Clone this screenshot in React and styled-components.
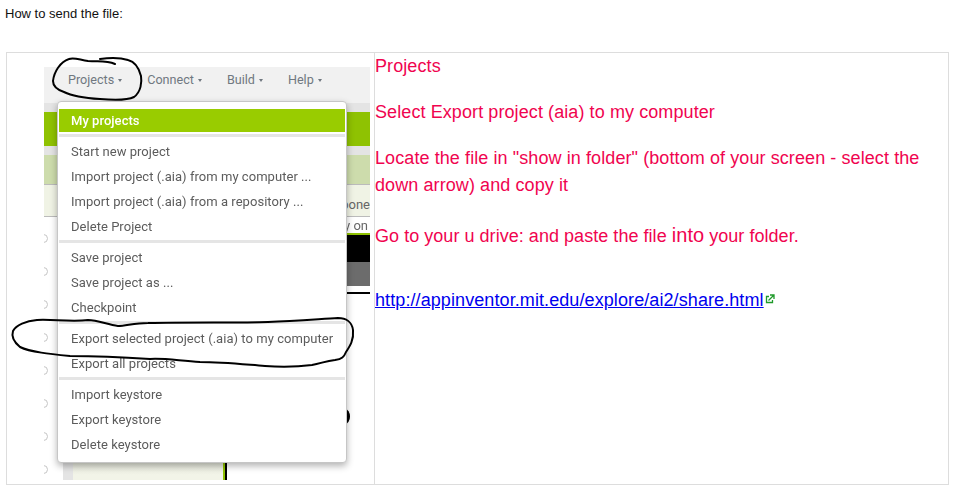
import React from 'react';
import styled, {createGlobalStyle} from 'styled-components';

const GlobalStyle = createGlobalStyle`
  html, body {
    margin: 0;
    padding: 0;
    background: #fff;
  }
`

const Page = styled.div`
  width: 963px;
  height: 490px;
  padding: 6px 14px 0 5px;
  box-sizing: border-box;
  font-family: "Liberation Sans", Arial, sans-serif;
  overflow: hidden;
`

const Intro = styled.p`
  margin: 0 0 31px;
  height: 15px;
  line-height: 15px;
  font-size: 13px;
  color: #111;
`

const Table = styled.div`
  display: flex;
  width: 943px;
  height: 433px;
  margin-left: 1px;
  box-sizing: border-box;
  border: 1px solid #ddd;
`

const ImageCell = styled.div`
  position: relative;
  width: 368px;
  flex-shrink: 0;
  padding: 14px 4px 0 37px;
  box-sizing: border-box;
  border-right: 1px solid #ddd;
`

const TextCell = styled.div`
  flex: 1;
  font-size: 18px;
  line-height: 27px;
  letter-spacing: 0.09px;
  color: #f0044f;
`

const Para = styled.p`
  margin: 0 0 ${p => p.$gap || 19}px;
  letter-spacing: ${p => p.$spacing || 'inherit'};
`

const Big = styled.span`
  font-size: 20px;
`

const Link = styled.a`
  color: #0000ee;
  text-decoration: underline;
`

const ExtIcon = styled.svg`
  width: 10px;
  height: 10px;
  margin-left: 1px;
  vertical-align: 2px;
`

const Shot = styled.div`
  position: relative;
  display: flex;
  flex-direction: column;
  width: 326px;
  height: 413px;
  overflow: hidden;
  font-family: Roboto, sans-serif;
  filter: blur(0.25px);
`

const TopBar = styled.div`
  display: flex;
  align-items: center;
  height: 36px;
  padding: 0 0 12px 24px;
  gap: 25px;
  flex-shrink: 0;
  box-sizing: border-box;
  background: #f1f1f1;
  font-size: 12.6px;
  color: #707880;
`

const TopItem = styled.span`
  white-space: nowrap;
`

const Caret = styled.span`
  display: inline-block;
  margin-left: 4px;
  vertical-align: 2px;
  border-top: 3px solid #707880;
  border-left: 2.5px solid transparent;
  border-right: 2.5px solid transparent;
`

const Dotted = styled.div`
  height: 9px;
  flex-shrink: 0;
  background-color: #e4e4e4;
  background-image: radial-gradient(#c8c8c8 0.6px, transparent 0.7px);
  background-size: 2px 2px;
`

const GreenBand = styled.div`
  height: 34px;
  flex-shrink: 0;
  background: #8fc202;
`

const PaleBand = styled.div`
  height: 29px;
  flex-shrink: 0;
  background: #cddcac;
  border-bottom: 1px solid #bbb;
`

const Tabs = styled.div`
  display: flex;
  justify-content: flex-end;
  align-items: center;
  height: 32px;
  flex-shrink: 0;
  box-sizing: border-box;
  background: #f0f3e5;
  border-bottom: 1px solid #bbb;
  font-size: 13px;
  color: #666;
  padding-top: 8px;
  white-space: nowrap;
`

const Work = styled.div`
  position: relative;
  display: flex;
  flex: 1;
`

const Radios = styled.div`
  display: flex;
  flex-direction: column;
  gap: 24px;
  width: 19px;
  padding-top: 17px;
  flex-shrink: 0;
`

const Radio = styled.span`
  display: block;
  width: 9px;
  height: 9px;
  flex-shrink: 0;
  margin-left: -5px;
  box-sizing: border-box;
  border: 1px solid #c4c4c4;
  border-radius: 50%;
`

const Middle = styled.div`
  display: flex;
  flex: 1;
  flex-direction: column;
  justify-content: flex-end;
`

const Footer = styled.div`
  display: flex;
  height: 17px;
`

const FooterDots = styled(Dotted)`
  width: 10px;
  height: 17px;
`

const FooterBody = styled.div`
  width: 150px;
  background: linear-gradient(to bottom, #e6e8dc, #f2f4e8 70%);
  border-right: 2px solid #8fc202;
`

const FooterRule = styled.div`
  width: 2px;
  background: #000;
`

const Side = styled.div`
  position: relative;
  width: 23px;
  flex-shrink: 0;
  color: #666;
  font-size: 13px;
`

const SideText = styled.div`
  height: 16px;
  line-height: 18px;
  margin-left: -3px;
  white-space: nowrap;
`

const SideLine = styled.div`
  height: 2px;
  background: #8fc202;
`

const SideBlack = styled.div`
  height: 27px;
  background: #000;
`

const SideGrey = styled.div`
  height: 24px;
  background: #6c6c6c;
`

const SideRule = styled.div`
  height: 2px;
  margin-top: 6px;
  background: #000;
`

const Blob = styled.span`
  position: absolute;
  left: -7px;
  top: 192px;
  width: 10px;
  height: 15px;
  border-radius: 50%;
  background: #000;
`

const Menu = styled.div`
  position: absolute;
  left: 13px;
  top: 34px;
  width: 290px;
  height: 362px;
  padding: 7px 1px 0;
  box-sizing: border-box;
  background: #fff;
  border: 1px solid #c6c6c6;
  border-radius: 4px;
  box-shadow: 0 3px 7px rgba(0, 0, 0, 0.3);
  font-size: 13px;
  letter-spacing: 0.04px;
  color: #5c5c5c;
`

const MenuItem = styled.div`
  height: ${p => p.$active ? 23 : 25}px;
  line-height: ${p => p.$active ? 23 : 25}px;
  padding-left: 12px;
  white-space: nowrap;
  background: ${p => p.$active ? '#99cc00' : 'transparent'};
  color: ${p => p.$active ? '#fff' : 'inherit'};
  font-weight: ${p => p.$active ? 500 : 400};
`

const MenuRule = styled.div`
  height: 3px;
  margin: ${p => p.$tight ? '2px 0 2px' : '1px 0 2px'};
  background: #e5e5e5;
`

const Scribble = styled.svg`
  position: absolute;
  left: 0;
  top: 0;
  width: 367px;
  height: 431px;
  overflow: visible;
  pointer-events: none;
`

const topMenu = ['Projects', 'Connect', 'Build', 'Help'];
const radioCount = 8;

export default function App() {
  return (
    <Page>
      <GlobalStyle />
      <Intro>How to send the file:</Intro>
      <Table>
        <ImageCell>
          <Shot>
            <TopBar>
              {topMenu.map(name => <TopItem key={name}>{name}<Caret /></TopItem>)}
            </TopBar>
            <Dotted />
            <GreenBand />
            <Dotted />
            <PaleBand />
            <Tabs>pone</Tabs>
            <Work>
              <Radios>
                {Array.from({length: radioCount}, (_, i) => <Radio key={i} />)}
              </Radios>
              <Middle>
                <Footer>
                  <FooterDots />
                  <FooterBody />
                  <FooterRule />
                </Footer>
              </Middle>
              <Side>
                <SideText>y on</SideText>
                <SideLine />
                <SideBlack />
                <SideGrey />
                <SideRule />
                <Blob />
              </Side>
            </Work>
            <Menu>
              <MenuItem $active>My projects</MenuItem>
              <MenuRule $tight />
              <MenuItem>Start new project</MenuItem>
              <MenuItem>Import project (.aia) from my computer ...</MenuItem>
              <MenuItem>Import project (.aia) from a repository ...</MenuItem>
              <MenuItem>Delete Project</MenuItem>
              <MenuRule />
              <MenuItem>Save project</MenuItem>
              <MenuItem>Save project as ...</MenuItem>
              <MenuItem>Checkpoint</MenuItem>
              <MenuRule />
              <MenuItem>Export selected project (.aia) to my computer</MenuItem>
              <MenuItem>Export all projects</MenuItem>
              <MenuRule />
              <MenuItem>Import keystore</MenuItem>
              <MenuItem>Export keystore</MenuItem>
              <MenuItem>Delete keystore</MenuItem>
            </Menu>
          </Shot>
          <Scribble viewBox="7 53 367 431" fill="none" stroke="#000" strokeWidth="2" strokeLinecap="round" strokeLinejoin="round">
            <path d="M115 64 C106 60 98 62 88 61 C80 60 74 57 69 59 C60 62 54 72 53 81 C53 87 58 90 64 92 C72 96 84 98 100 99 C112 100 128 100 134 97 C141 92 142 82 141 76 C139 68 136 62 128 60 C118 57 108 58 100 59" />
            <path d="M37 320 C50 319 72 322 88 320 C98 320 108 325 118 326 C126 326 134 323 148 323 C190 322 240 323 268 322 C295 321 320 319 338 318 C346 318 352 322 353 330 C354 340 350 346 346 352 C344 357 342 359 335 360 C326 361 322 363 312 365 C296 367 280 367 265 366 C240 364 222 362 200 362 C180 361 165 358 150 359 C120 357 95 356 70 356 C50 354 30 352 20 347 C14 342 11 337 13 331 C16 325 26 321 37 320 Z" />
          </Scribble>
        </ImageCell>
        <TextCell>
          <Para>Projects</Para>
          <Para>Select Export project (aia) to my computer</Para>
          <Para $gap={23}>Locate the file in "show in folder" (bottom of your screen - select the down arrow) and copy it</Para>
          <Para $gap={37} $spacing="0.04px">Go to your u drive: and paste the file <Big>into</Big> your folder.</Para>
          <Para>
            <Link href="#">http://appinventor.mit.edu/explore/ai2/share.html</Link>
            <ExtIcon viewBox="0 0 10 10" fill="none" stroke="#1f9a2a" strokeWidth="1.3">
              <path d="M4 2.5 H1.5 V8.5 H7.5 V6" />
              <path d="M3.5 6.5 L8.5 1.5 M5 1 H9 V5" />
            </ExtIcon>
          </Para>
        </TextCell>
      </Table>
    </Page>
  );
};
